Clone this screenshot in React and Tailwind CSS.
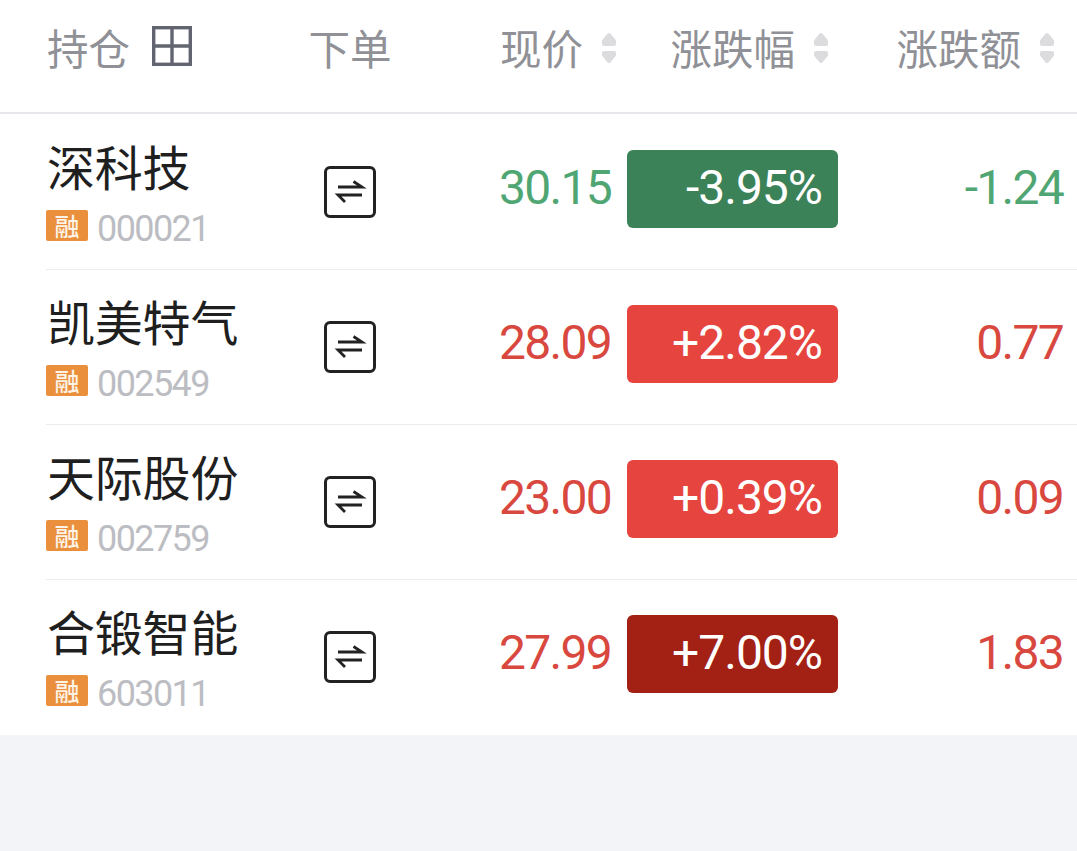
import React from 'react';

const rows = [
  { name: '深科技', code: '000021', price: '30.15', pct: '-3.95%', amt: '-1.24', text: 'text-[#4fa673]', badge: 'bg-[#3c8258]' },
  { name: '凯美特气', code: '002549', price: '28.09', pct: '+2.82%', amt: '0.77', text: 'text-[#d9483f]', badge: 'bg-[#e5453e]' },
  { name: '天际股份', code: '002759', price: '23.00', pct: '+0.39%', amt: '0.09', text: 'text-[#d9483f]', badge: 'bg-[#e5453e]' },
  { name: '合锻智能', code: '603011', price: '27.99', pct: '+7.00%', amt: '1.83', text: 'text-[#d9483f]', badge: 'bg-[#a32014]' },
];

function SortIcon() {
  return (
    <svg width="14" height="32" viewBox="0 0 14 32" className="ml-[19px] shrink-0">
      <g fill="#dcdcde" stroke="#dcdcde" strokeWidth="4" strokeLinejoin="round">
        <polygon points="7,3 12,9 12,12 2,12 2,9" />
        <polygon points="7,29 12,23 12,21 2,21 2,23" />
      </g>
    </svg>
  );
}

function GridIcon() {
  return (
    <svg width="40" height="40" viewBox="0 0 40 40" fill="none" stroke="#62646f" strokeWidth="3.4" className="ml-[22px] mb-[3px]">
      <rect x="1.7" y="1.7" width="36.6" height="36.6" />
      <path d="M20 2 V38 M2 20 H38" />
    </svg>
  );
}

function SwapIcon() {
  return (
    <svg width="52" height="52" viewBox="0 0 52 52" fill="none" stroke="#222222" strokeWidth="2.8" className="mb-[1px] mr-[1px]">
      <rect x="1.5" y="1.5" width="49" height="49" rx="4.5" strokeWidth="3" />
      <path d="M14 21 H38 L29.5 15.5" />
      <path d="M38 29 H14 L21 36" />
    </svg>
  );
}

function Row({ row }) {
  return (
    <div className="flex h-[155px] ml-[46px] border-b border-[#ececef] last:border-b-0">
      <div className="w-[254px] flex flex-col pt-[22px]">
        <div className="h-[56px] pl-[1px] text-[48px] tracking-[-0.2px] leading-[56px] text-[#1f1f1f]">{row.name}</div>
        <div className="flex items-start mt-[17px]">
          <span className="w-[42px] h-[31px] rounded-[2px] bg-[#ea8f3c] text-[#fdf3e6] text-[25px] font-medium leading-[31px] text-center">融</span>
          <span className="ml-[9px] mt-[1px] text-[36px] leading-[36px] tracking-[-1.6px] text-[#bcbdc2] font-['Roboto',sans-serif]">{row.code}</span>
        </div>
      </div>
      <div className="w-[100px] flex items-center justify-center">
        <SwapIcon />
      </div>
      <div className={`w-[211px] flex justify-end items-center pb-[9px] text-[48px] tracking-[-1.7px] font-['Roboto',sans-serif] ${row.text}`}>
        {row.price}
      </div>
      <div className="w-[16px]" />
      <div className="w-[211px] pt-[35px]">
        <div className={`h-[78px] rounded-[6px] flex items-center justify-end pr-[16px] pb-[3px] text-white text-[48px] tracking-[-1px] font-['Roboto',sans-serif] ${row.badge}`}>
          {row.pct}
        </div>
      </div>
      <div className={`w-[225px] flex justify-end items-center pb-[9px] text-[48px] tracking-[-1.7px] font-['Roboto',sans-serif] ${row.text}`}>
        {row.amt}
      </div>
    </div>
  );
}

export default function App() {
  return (
    <div className="w-[1077px] h-[851px] overflow-hidden bg-[#f2f4f8] font-['Noto_Sans_CJK_SC','Noto_Sans',sans-serif]">
      <div className="bg-white">
        <div className="flex h-[114px] mb-[1px] border-b-2 border-[#e6e7ea] text-[41.5px] text-[#909197] pb-[17px]">
          <div className="w-[300px] pl-[47px] flex items-center">
            持仓
            <GridIcon />
          </div>
          <div className="w-[100px] flex items-center justify-center">下单</div>
          <div className="w-[216px] flex items-center justify-end">现价<SortIcon /></div>
          <div className="w-[212px] flex items-center justify-end">涨跌幅<SortIcon /></div>
          <div className="w-[226px] flex items-center justify-end">涨跌额<SortIcon /></div>
        </div>
        {rows.map((row) => (
          <Row key={row.code} row={row} />
        ))}
      </div>
    </div>
  );
}
